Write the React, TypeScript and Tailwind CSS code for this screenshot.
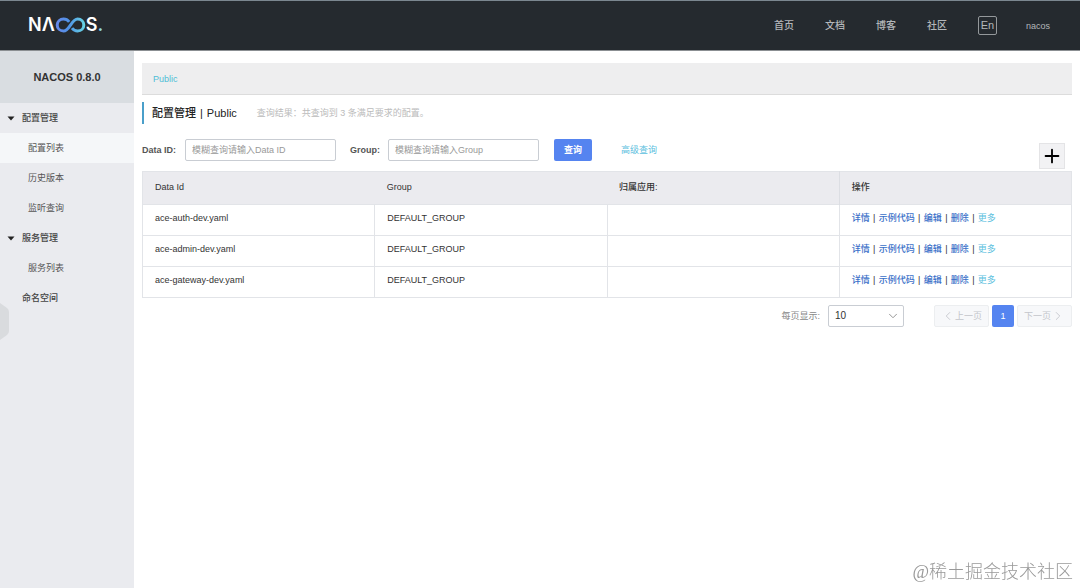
import { useState } from "react";
import { ChevronDown, ChevronLeft, ChevronRight, Plus } from "lucide-react";

const navLinks = ["首页", "文档", "博客", "社区"];

const menu = [
  { label: "配置管理", children: ["配置列表", "历史版本", "监听查询"] },
  { label: "服务管理", children: ["服务列表"] },
  { label: "命名空间", children: [] },
];

const configs = [
  { dataId: "ace-auth-dev.yaml", group: "DEFAULT_GROUP", app: "" },
  { dataId: "ace-admin-dev.yaml", group: "DEFAULT_GROUP", app: "" },
  { dataId: "ace-gateway-dev.yaml", group: "DEFAULT_GROUP", app: "" },
];

const actions = ["详情", "示例代码", "编辑", "删除"];

function Logo() {
  return (
    <a
      href="#"
      aria-label="Nacos"
      className="flex items-center pb-0.5 font-['Inter',sans-serif] text-[18px] leading-none font-semibold text-white"
    >
      <span>NΛ</span>
      <svg viewBox="0 0 31 16" className="h-4 w-[31px]" fill="none">
        <defs>
          <linearGradient id="loop" x1="0" y1="0" x2="31" y2="0" gradientUnits="userSpaceOnUse">
            <stop offset="0" stopColor="#6a86ea" />
            <stop offset="0.45" stopColor="#4f93e6" />
            <stop offset="1" stopColor="#6adbe3" />
          </linearGradient>
        </defs>
        <path
          d="M14.200 4.800C12.800 3 10.800 2 8.600 2C5 2 2.200 4.600 2.200 8S5 14 8.600 14C14.500 14 16.500 2 22.600 2C26.200 2 28.800 4.600 28.800 8S26.200 14 22.600 14C20.400 14 18.400 13 17 11.200"
          stroke="url(#loop)"
          strokeWidth="3"
        />
      </svg>
      <span>S</span>
      <span className="text-[#8fd8e0]">.</span>
    </a>
  );
}

function Header() {
  return (
    <header className="flex h-[51px] items-center justify-between border-t border-b border-t-[#7b8790] border-b-[#8b8f92] bg-[#252a2f] pr-[30px] pl-7">
      <Logo />
      <nav className="flex items-center gap-[31px] text-[10px] font-medium text-[#b4b7ba]">
        {navLinks.map((link) => (
          <a key={link} href="#" className="hover:text-white">
            {link}
          </a>
        ))}
        <div className="flex items-center gap-[29px]">
          <button className="flex h-[19px] w-[19px] items-center justify-center rounded-xs border border-[#94989b] text-[11px] leading-none">
            En
          </button>
          <a href="#" className="text-[9px] hover:text-white">
            nacos
          </a>
        </div>
      </nav>
    </header>
  );
}

function Sidebar() {
  const [active, setActive] = useState("配置列表");
  const [closed, setClosed] = useState<string[]>([]);

  const toggle = (label: string) => {
    setClosed(closed.includes(label) ? closed.filter((l) => l !== label) : [...closed, label]);
  };

  return (
    <aside className="relative w-[134px] shrink-0 bg-[#eaebef]">
      <h1 className="flex h-[52px] items-center justify-center bg-[#d9dde1] text-[11px] font-bold text-[#333]">
        NACOS 0.8.0
      </h1>
      <ul>
        {menu.map((item) => (
          <li key={item.label}>
            <button
              onClick={() => toggle(item.label)}
              className="flex h-[30px] w-full items-center pl-[7px] text-left font-medium text-[#444]"
            >
              <span className="w-[15px]">
                {item.children.length > 0 && (
                  <svg viewBox="0 0 8 5" className="h-[5px] w-2" fill="#222">
                    <path d="M0.500 0.500h7L4 4.500z" />
                  </svg>
                )}
              </span>
              {item.label}
            </button>
            {!closed.includes(item.label) &&
              item.children.map((child) => (
                <a
                  key={child}
                  href="#"
                  onClick={() => setActive(child)}
                  className={`flex h-[30px] items-center pl-7 text-[#555] ${
                    active === child ? "bg-[#f5f7f9]" : ""
                  }`}
                >
                  {child}
                </a>
              ))}
          </li>
        ))}
      </ul>
      {/* collapse handle */}
      <button aria-label="收起" className="absolute top-[252px] left-0">
        <svg viewBox="0 0 9 37" className="h-[37px] w-[9px]" fill="#d9dbde">
          <path d="M0 0L7 5Q9 6.500 9 9V28Q9 30.500 7 32L0 37z" />
        </svg>
      </button>
    </aside>
  );
}

function SearchForm() {
  return (
    <form onSubmit={(e) => e.preventDefault()} className="mt-[15px] flex h-8 items-start">
      <label htmlFor="dataId" className="w-[43px] leading-[22px] font-bold text-[#555]">
        Data ID:
      </label>
      <input
        id="dataId"
        placeholder="模糊查询请输入Data ID"
        className="h-[22px] w-[151px] rounded-xs border border-[#c9cdd3] px-1.5 placeholder:text-[#999]"
      />
      <label htmlFor="group" className="ml-3.5 w-[38px] leading-[22px] font-bold text-[#555]">
        Group:
      </label>
      <input
        id="group"
        placeholder="模糊查询请输入Group"
        className="h-[22px] w-[151px] rounded-xs border border-[#c9cdd3] px-1.5 placeholder:text-[#999]"
      />
      <button type="submit" className="ml-[15px] h-[22px] w-[38px] rounded-xs bg-[#5584f0] font-bold text-white">
        查询
      </button>
      <a href="#" className="ml-[29px] leading-[22px] text-[#5bc0de]">
        高级查询
      </a>
      <button
        type="button"
        aria-label="新建配置"
        className="mt-1 mr-[7px] ml-auto flex h-[26px] w-[26px] items-center justify-center border border-[#e4e4e6] bg-[#f2f2f4] text-black"
      >
        <Plus size={22} strokeWidth={2} />
      </button>
    </form>
  );
}

function ConfigTable() {
  return (
    <table className="w-full table-fixed border-collapse border border-[#e2e4e8] text-left text-[#333]">
      <thead>
        <tr className="h-[33px] bg-[#ebebef]">
          <th className="px-3 pb-0.5 font-medium">Data Id</th>
          <th className="px-3 pb-0.5 font-medium">Group</th>
          <th className="px-3 pb-0.5 font-medium">归属应用:</th>
          <th className="border-l border-[#dcdee3] px-3 pb-0.5 font-medium">操作</th>
        </tr>
      </thead>
      <tbody>
        {configs.map((row) => (
          <tr key={row.dataId} className="h-[31px]">
            <td className="border border-[#e2e4e8] px-3 pb-1">{row.dataId}</td>
            <td className="border border-[#e2e4e8] px-3 pb-1">{row.group}</td>
            <td className="border border-[#e2e4e8] px-3 pb-1">{row.app}</td>
            <td className="border border-[#e2e4e8] px-3 pb-1">
              <div className="flex">
                {actions.map((action) => (
                  <span key={action} className="flex">
                    <a href="#" className="font-medium text-[#3a70c8]">
                      {action}
                    </a>
                    <span className="w-[9px] text-center">|</span>
                  </span>
                ))}
                <a href="#" className="text-[#5bc0de]">
                  更多
                </a>
              </div>
            </td>
          </tr>
        ))}
      </tbody>
    </table>
  );
}

function Pagination() {
  return (
    <div className="mt-[7px] flex items-center justify-end">
      <label htmlFor="pageSize" className="text-[#888]">
        每页显示:
      </label>
      <div className="relative ml-2">
        <select
          id="pageSize"
          defaultValue="10"
          className="h-[22px] w-[76px] appearance-none rounded-xs border border-[#c9cdd3] bg-white px-1.5 text-[10px] text-[#333]"
        >
          <option>10</option>
          <option>20</option>
          <option>50</option>
        </select>
        <ChevronDown
          size={14}
          strokeWidth={1.5}
          className="pointer-events-none absolute top-1 right-1 text-[#888]"
        />
      </div>
      <div className="ml-[30px] flex gap-[3px]">
        <button
          disabled
          className="flex h-[22px] w-[55px] items-center justify-center rounded-xs border border-[#eceef0] bg-[#f7f8fa] text-[#c4c6cb]"
        >
          <ChevronLeft size={14} strokeWidth={1.5} />
          上一页
        </button>
        <button className="h-[22px] w-[22px] rounded-xs bg-[#5584f0] text-white">1</button>
        <button
          disabled
          className="flex h-[22px] w-[55px] items-center justify-center rounded-xs border border-[#eceef0] bg-[#f7f8fa] text-[#c4c6cb]"
        >
          下一页
          <ChevronRight size={14} strokeWidth={1.5} />
        </button>
      </div>
    </div>
  );
}

export default function App() {
  return (
    <div className="flex min-h-screen flex-col bg-white font-['Liberation_Sans','Noto_Sans_CJK_SC',sans-serif] text-[9px] leading-[14px]">
      <Header />
      <div className="flex flex-1">
        <Sidebar />
        <main className="min-w-0 flex-1 px-2 pt-3">
          <div className="flex h-8 items-center border-b border-[#dcdcdc] bg-[#eeeeef] px-[11px]">
            <a href="#" className="text-[#4fbdd6]">
              Public
            </a>
          </div>
          <div className="mt-[7px] flex h-[22px] items-center border-l-2 border-[#4a9fca] pl-2">
            <h2 className="flex gap-1 text-[11px] font-medium text-[#222]">
              <span>配置管理</span>
              <span>|</span>
              <span>Public</span>
            </h2>
            <span className="ml-5 text-[#bbb]">查询结果：共查询到 3 条满足要求的配置。</span>
          </div>
          <SearchForm />
          <ConfigTable />
          <Pagination />
        </main>
      </div>
      <div className="fixed right-[7px] bottom-1 font-['Liberation_Serif','Noto_Sans_CJK_SC',serif] text-[18px] leading-6 font-light text-[#999]">
        @稀土掘金技术社区
      </div>
    </div>
  );
}
